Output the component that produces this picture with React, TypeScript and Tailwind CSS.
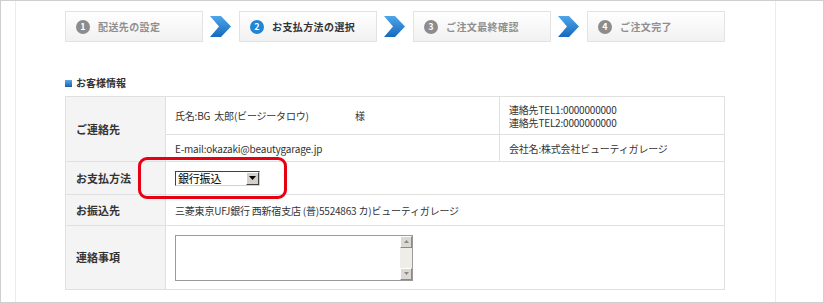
import React from "react";

const steps = [
  { n: 1, label: "配送先の設定", active: false },
  { n: 2, label: "お支払方法の選択", active: true },
  { n: 3, label: "ご注文最終確認", active: false },
  { n: 4, label: "ご注文完了", active: false },
];

function Chevron() {
  return (
    <svg width="21" height="21" viewBox="0 0 21 21">
      <defs>
        <linearGradient id="chev" x1="0" y1="0" x2="0" y2="1">
          <stop offset="0" stopColor="#4fa6ea" />
          <stop offset="1" stopColor="#1669bd" />
        </linearGradient>
      </defs>
      <polygon points="0,0 11,0 21,10.5 11,21 0,21 9,10.5" fill="url(#chev)" />
    </svg>
  );
}

function StepBox({ n, label, active }: { n: number; label: string; active: boolean }) {
  return (
    <div className="w-[138px] h-[31px] border border-[#e3e3e3] bg-gradient-to-b from-white to-[#f1f1f1] flex items-center pl-[10px] gap-[8px]">
      <span
        className={`w-[14px] h-[14px] rounded-full flex items-center justify-center text-white text-[9px] font-bold leading-none ${
          active ? "bg-[#1f86d6]" : "bg-[#8c8c8c]"
        }`}
      >
        {n}
      </span>
      <span
        className={`text-[10px] font-bold tracking-[0.4px] ${active ? "text-[#333]" : "text-[#8f8f8f]"}`}
      >
        {label}
      </span>
    </div>
  );
}

function SelectBox() {
  return (
    <div className="w-[85px] h-[15px] border-t border-l border-[#404040] border-b border-r border-b-[#d4d0c8] border-r-[#d4d0c8] bg-white flex items-center">
      <span className="flex-1 pl-[2px] text-[11px] leading-none text-black">銀行振込</span>
      <span className="w-[13px] h-[13px] bg-[#d4d0c8] border-t border-l border-white border-b border-r border-b-[#404040] border-r-[#404040] flex items-center justify-center">
        <svg width="7" height="4" viewBox="0 0 7 4">
          <polygon points="0,0 7,0 3.5,4" fill="#000" />
        </svg>
      </span>
    </div>
  );
}

function TextBox() {
  return (
    <div className="w-[238px] h-[46px] border border-[#9a9a9a] bg-white flex justify-end">
      <div className="w-[12px] h-full bg-[#efede8] flex flex-col justify-between">
        <span className="w-[12px] h-[12px] bg-[#dcd9d2] border border-t-white border-l-white border-b-[#8a8a8a] border-r-[#8a8a8a] flex items-center justify-center">
          <svg width="5" height="3" viewBox="0 0 5 3">
            <polygon points="0,3 5,3 2.5,0" fill="#888" />
          </svg>
        </span>
        <span className="w-[12px] h-[12px] bg-[#dcd9d2] border border-t-white border-l-white border-b-[#8a8a8a] border-r-[#8a8a8a] flex items-center justify-center">
          <svg width="5" height="3" viewBox="0 0 5 3">
            <polygon points="0,0 5,0 2.5,3" fill="#888" />
          </svg>
        </span>
      </div>
    </div>
  );
}

export default function App() {
  const label = "bg-[#f4f4f4] border border-[#e0e0e0] pl-[10px] text-[11px] font-bold text-[#333] text-left align-middle";
  const cell = "border border-[#e0e0e0] pl-[9px] text-[10px] tracking-[-0.2px] text-[#333] align-middle";
  return (
    <div className="w-[824px] h-[303px] border border-[#cfcfcf] bg-white flex font-['Noto_Sans_CJK_JP',sans-serif]">
      <div className="w-[15px] border-r border-[#ececec]" />
      <div className="w-[759px] pl-[49px] pt-[10px]">
        <div className="flex items-center">
          {steps.map((s, i) => (
            <React.Fragment key={s.n}>
              <StepBox {...s} />
              {i < steps.length - 1 && (
                <div className="w-[36px] pl-[7px] flex items-center">
                  <Chevron />
                </div>
              )}
            </React.Fragment>
          ))}
        </div>

        <div className="mt-[34px] h-[14px] flex items-center gap-[4px]">
          <span className="w-[7px] h-[7px] bg-gradient-to-b from-[#5aa9e6] to-[#1a5fae]" />
          <span className="text-[10px] font-bold text-[#333] leading-none">お客様情報</span>
        </div>

        <div className="relative mt-[6px] w-[659px]">
          <table className="w-[659px] border-collapse table-fixed">
            <colgroup>
              <col className="w-[100px]" />
              <col className="w-[334px]" />
              <col className="w-[225px]" />
            </colgroup>
            <tbody>
              <tr className="h-[38px]">
                <th rowSpan={2} className={label}>
                  ご連絡先
                </th>
                <td className={cell}>
                  <div className="flex">
                    <span className="w-[180px]">氏名:BG&nbsp;&nbsp;太郎(ビージータロウ)</span>
                    <span>様</span>
                  </div>
                </td>
                <td className={`${cell} leading-[13px]`}>
                  <div>連絡先TEL1:0000000000</div>
                  <div>連絡先TEL2:0000000000</div>
                </td>
              </tr>
              <tr className="h-[27px]">
                <td className={cell}>E-mail:okazaki@beautygarage.jp</td>
                <td className={cell}>会社名:株式会社ビューティガレージ</td>
              </tr>
              <tr className="h-[33px]">
                <th className={label}>お支払方法</th>
                <td colSpan={2} className={cell}>
                  <SelectBox />
                </td>
              </tr>
              <tr className="h-[31px]">
                <th className={label}>お振込先</th>
                <td colSpan={2} className={cell}>
                  三菱東京UFJ銀行 西新宿支店 (普)5524863 カ)ビューティガレージ
                </td>
              </tr>
              <tr className="h-[64px]">
                <th className={label}>連絡事項</th>
                <td colSpan={2} className={cell}>
                  <TextBox />
                </td>
              </tr>
            </tbody>
          </table>
          <div className="absolute left-[73px] top-[61px] w-[149px] h-[42px] border-[3px] border-[#e60012] rounded-[9px]" />
        </div>
      </div>
      <div className="flex-1 border-l border-[#ececec]" />
    </div>
  );
}
